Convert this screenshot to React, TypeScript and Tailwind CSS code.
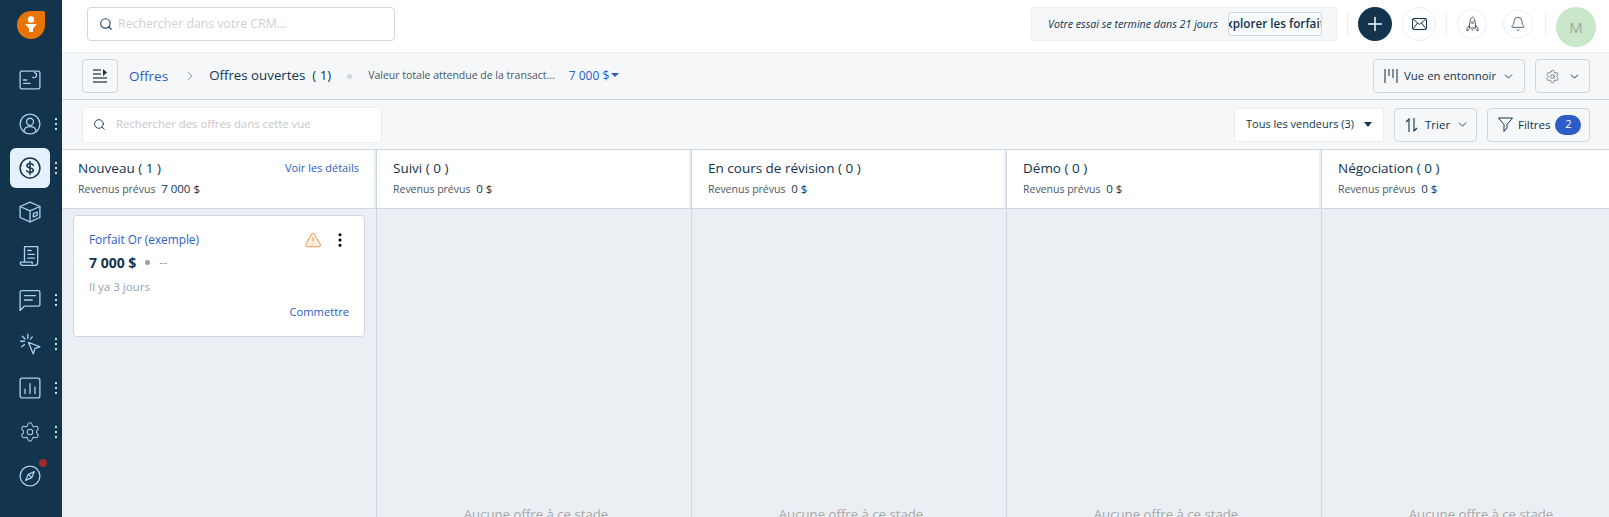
import { ReactNode } from 'react'
import { Search, ChevronDown, ChevronRight, Plus, Bell, Settings, TriangleAlert, EllipsisVertical } from 'lucide-react'

const stroke = {
  fill: 'none',
  stroke: 'currentColor',
  strokeWidth: 1.2,
  strokeLinecap: 'round' as const,
  strokeLinejoin: 'round' as const,
}

function Glyph({ children, size = 22 }: { children: ReactNode, size?: number }) {
  return <svg width={size} height={size} viewBox="0 0 20 20" {...stroke}>{children}</svg>
}

const navItems: { icon: ReactNode, dots?: boolean, active?: boolean, badge?: boolean }[] = [
  {
    icon: <Glyph><rect x="1" y="2" width="18" height="16" rx="1.5" /><path d="M4 13h6M4 10h3M12.500 7.500a2.300 2.300 0 0 0 3.500-2 2.300 2.300 0 0 0-2-2.200" /></Glyph>,
  },
  {
    icon: <Glyph><circle cx="10" cy="10" r="9" /><circle cx="10" cy="8" r="3.200" /><path d="M4.500 17c0-3 2-4.600 5.500-4.600s5.500 1.600 5.500 4.600" /></Glyph>,
    dots: true,
  },
  {
    icon: <Glyph><circle cx="10" cy="10" r="9" strokeWidth={1.4} /><path strokeWidth={1.4} d="M13 7.500c-.5-1-1.600-1.500-3-1.500-1.700 0-2.800.8-2.800 2 0 2.800 5.800 1.300 5.800 4 0 1.200-1.300 2-3 2-1.500 0-2.600-.6-3-1.500M10 4v12" /></Glyph>,
    dots: true,
    active: true,
  },
  {
    icon: <Glyph><path d="M10 1l9 4v10l-9 4-9-4V5z" /><path d="M1 5l9 4 9-4M10 9v10" /><path d="M13 11.500l3.500-1.500v3l-3.500 1.500z" /></Glyph>,
  },
  {
    icon: <Glyph><path d="M5 15V1.500h12V16a2.500 2.500 0 0 1-2.500 2.500H3A2 2 0 0 1 1.500 15.500H12v1.500" /><path d="M8 5h3M8 8.500h6M8 12h6" /></Glyph>,
  },
  {
    icon: <Glyph><path d="M1 3a1.500 1.500 0 0 1 1.500-1.500h15A1.500 1.500 0 0 1 19 3v11a1.500 1.500 0 0 1-1.500 1.500H5L1 19.500z" /><path d="M5 6h10M5 10h7" /></Glyph>,
    dots: true,
  },
  {
    icon: <Glyph><path d="M8.500 8.500l10.500 4-4.500 1.500-1.500 5z" /><path d="M8 1v4M1.500 7.500h3.500M3 3l2.500 2.500M12 3.500L10.500 5.500M2.500 12.500L5 10.500" /></Glyph>,
    dots: true,
  },
  {
    icon: <Glyph><rect x="1" y="1" width="18" height="18" rx="2" /><path d="M5.500 15v-4M10 15V6M14.500 15V9" /></Glyph>,
    dots: true,
  },
  {
    icon: <Settings size={22} strokeWidth={1.1} />,
    dots: true,
  },
  {
    icon: <Glyph><circle cx="10" cy="10" r="9" /><path d="M14 6l-2.500 5.500L6 14l2.500-5.500z" /><path d="M8.500 8.500l3 3" /></Glyph>,
    badge: true,
  },
]

const columns = [
  { name: 'Nouveau ( 1 )', revenue: '7 000 $', details: true },
  { name: 'Suivi ( 0 )', revenue: '0 $' },
  { name: 'En cours de révision ( 0 )', revenue: '0 $' },
  { name: 'Démo ( 0 )', revenue: '0 $' },
  { name: 'Négociation ( 0 )', revenue: '0 $' },
]

function Sidebar() {
  return (
    <div className="w-[62px] shrink-0 bg-[#12344d] flex flex-col items-start">
      <div className="h-[60px] w-full flex justify-center pt-[11px]">
        <svg width="28" height="28" viewBox="0 0 28 28">
          <path d="M14 0h12a2 2 0 0 1 2 2v12a14 14 0 1 1-14-14z" fill="#e87503" />
          <circle cx="14" cy="8.500" r="3.200" fill="#fff" />
          <path d="M8 13h12l-4 4.500v3.500h-4v-3.500z" fill="#fff" />
        </svg>
      </div>
      <div className="flex flex-col gap-[4px] pl-[10px]">
        {navItems.map((item, i) => (
          <div key={i} className="relative w-[40px] h-[40px]">
            <div className={'w-[40px] h-[40px] rounded-[6px] flex items-center justify-center ' + (item.active ? 'bg-[#e5f2fd] text-[#12344d]' : 'text-[#a9d0f0]')}>
              {item.icon}
            </div>
            {item.dots && (
              <div className="absolute left-[45px] top-[14px] flex flex-col gap-[3px]">
                <span className="w-[2px] h-[2px] bg-[#cfd7df]" />
                <span className="w-[2px] h-[2px] bg-[#cfd7df]" />
                <span className="w-[2px] h-[2px] bg-[#cfd7df]" />
              </div>
            )}
            {item.badge && <span className="absolute left-[29px] top-[3px] w-[8px] h-[8px] rounded-full bg-[#a32a2a]" />}
          </div>
        ))}
      </div>
    </div>
  )
}

function TopBar() {
  return (
    <div className="h-[53px] shrink-0 bg-white border-b border-[#ebeff3] flex items-start pl-[25px] pr-[13px] pt-[7px]">
      <div className="w-[308px] h-[34px] border border-[#cfd7df] rounded-[4px] flex items-center pl-[11px] gap-[5px]">
        <Search size={14} className="text-[#264966]" strokeWidth={2} />
        <span className="text-[12.300px] text-[#d3cfcf]">Rechercher dans votre CRM...</span>
      </div>
      <div className="ml-auto flex items-start">
        <div className="w-[306px] h-[34px] bg-[#f5f7f9] border border-[#ebeff3] rounded-[4px] flex items-center pl-[16px]">
          <span className="text-[10.700px] italic text-[#12344d] whitespace-nowrap">Votre essai se termine dans 21 jours</span>
          <div className="ml-[10px] w-[94px] h-[24px] bg-[#f9fafb] border border-[#cfd7df] rounded-[3px] overflow-hidden flex justify-center items-center">
            <span className="text-[11.700px] font-semibold text-[#12344d] whitespace-nowrap">Explorer les forfaits</span>
          </div>
        </div>
        <span className="ml-[10px] mt-[5px] w-px h-[24px] bg-[#ebeff3]" />
        <div className="ml-[10px] w-[34px] h-[34px] rounded-full bg-[#12344d] flex items-center justify-center">
          <Plus size={22} className="text-white" strokeWidth={1.6} />
        </div>
        <div className="ml-[10px] w-[34px] h-[34px] rounded-full border border-[#ebeff3] flex items-center justify-center">
          <svg width="15" height="12" viewBox="0 0 15 12" fill="none" stroke="#12344d" strokeWidth="1">
            <rect x="0.500" y="0.500" width="14" height="11" rx="1" />
            <path d="M1 1l6.500 5.500L14 1M1 11l4.500-6M14 11L9.500 5" />
          </svg>
        </div>
        <span className="ml-[10px] mt-[5px] w-px h-[24px] bg-[#ebeff3]" />
        <div className="ml-[10px] mt-[2px] w-[30px] h-[30px] rounded-full border border-[#ebeff3] flex items-center justify-center">
          <svg width="15" height="17" viewBox="0 0 15 17" fill="none" stroke="#475867" strokeWidth="1">
            <path d="M7.500 1C5 3 4.500 6 4.500 12h6c0-6-.5-9-3-11z" />
            <circle cx="7.500" cy="6.500" r="1" />
            <path d="M4.500 9L2 12.500V15l2.500-2M10.500 9l2.500 3.500V15l-2.500-2M6.500 14h2" />
          </svg>
        </div>
        <div className="ml-[16px] mt-[2px] w-[30px] h-[30px] rounded-full border border-[#ebeff3] flex items-center justify-center">
          <Bell size={16} className="text-[#12344d]" strokeWidth={1.1} />
        </div>
        <span className="ml-[12px] mt-[5px] w-px h-[24px] bg-[#ebeff3]" />
        <div className="ml-[10px] w-[40px] h-[40px] rounded-full bg-[#c9e7c9] flex items-center justify-center text-[15px] text-[#a0a8a0]">M</div>
      </div>
    </div>
  )
}

function SubBar() {
  return (
    <div className="h-[47px] shrink-0 bg-[#f5f7f9] border-b border-[#cfd7df] flex items-center pl-[20px] pr-[19px]">
      <div className="w-[36px] h-[34px] border border-[#cfd7df] rounded-[4px] flex items-center justify-center">
        <svg width="15" height="14" viewBox="0 0 15 14" fill="none" stroke="#475867" strokeWidth="1.300">
          <path d="M0 1h8M0 5h8M0 9h14M0 13h14" />
          <path d="M10 0l4 3.500L10 7z" fill="#12344d" stroke="none" />
        </svg>
      </div>
      <span className="ml-[11px] text-[13.500px] text-[#2c5cc5]">Offres</span>
      <ChevronRight size={14} className="ml-[15px] text-[#475867]" strokeWidth={1.2} />
      <span className="ml-[12px] text-[13.300px] text-[#12344d] whitespace-nowrap">Offres ouvertes&nbsp; ( 1)</span>
      <span className="ml-[16px] w-[5px] h-[5px] rounded-full bg-[#cfd7df]" />
      <span className="ml-[16px] text-[10.500px] text-[#475867] whitespace-nowrap">Valeur totale attendue de la transact...</span>
      <span className="ml-[14px] text-[12px] text-[#2c5cc5] whitespace-nowrap">7 000 $</span>
      <span className="ml-[2px] mb-[2px] w-0 h-0 border-l-[4px] border-r-[4px] border-t-[4px] border-l-transparent border-r-transparent border-t-[#2c5cc5]" />
      <div className="ml-auto w-[152px] h-[34px] border border-[#cfd7df] rounded-[4px] flex items-center pl-[10px]">
        <svg width="14" height="14" viewBox="0 0 14 14" stroke="#475867" strokeWidth="1.300"><path d="M1 0v14M5 0v7M9 0v9M13 0v14" /></svg>
        <span className="ml-[6px] text-[11.400px] text-[#12344d] whitespace-nowrap">Vue en entonnoir</span>
        <ChevronDown size={13} className="ml-[6px] text-[#12344d]" strokeWidth={1.6} />
      </div>
      <div className="ml-[10px] w-[55px] h-[34px] border border-[#cfd7df] rounded-[4px] flex items-center justify-center gap-[8px]">
        <Settings size={15} className="text-[#475867]" strokeWidth={1.1} />
        <ChevronDown size={13} className="text-[#12344d]" strokeWidth={1.8} />
      </div>
    </div>
  )
}

function ToolBar() {
  return (
    <div className="h-[50px] shrink-0 bg-[#f5f7f9] border-b border-[#cfd7df] flex items-center pl-[20px] pr-[19px]">
      <div className="w-[300px] h-[36px] bg-white border border-[#ebeff3] rounded-[4px] flex items-center pl-[10px] gap-[10px]">
        <Search size={13} className="text-[#264966]" strokeWidth={1.8} />
        <span className="text-[11.300px] text-[#c7c7c7] whitespace-nowrap">Rechercher des offres dans cette vue</span>
      </div>
      <div className="ml-auto w-[150px] h-[34px] bg-white border border-[#ebeff3] flex items-center pl-[11px]">
        <span className="text-[11px] text-[#12344d] whitespace-nowrap">Tous les vendeurs (3)</span>
        <span className="ml-[10px] w-0 h-0 border-l-[4px] border-r-[4px] border-t-[5px] border-l-transparent border-r-transparent border-t-[#12344d]" />
      </div>
      <div className="ml-[10px] w-[83px] h-[34px] border border-[#cfd7df] rounded-[4px] flex items-center pl-[10px]">
        <svg width="14" height="14" viewBox="0 0 14 14" fill="none" stroke="#12344d" strokeWidth="1.100"><path d="M4 14V1L1 4M9 0v13l3-3" /></svg>
        <span className="ml-[6px] text-[11.500px] text-[#12344d]">Trier</span>
        <ChevronDown size={13} className="ml-[6px] text-[#12344d]" strokeWidth={1.6} />
      </div>
      <div className="ml-[10px] w-[103px] h-[34px] border border-[#cfd7df] rounded-[4px] flex items-center pl-[10px]">
        <svg width="15" height="15" viewBox="0 0 15 15" fill="none" stroke="#12344d" strokeWidth="1" strokeLinejoin="round">
          <path d="M.5 1h14L9 7.500V11l-3 3.500V7.500z" />
        </svg>
        <span className="ml-[5px] text-[11.500px] text-[#12344d]">Filtres</span>
        <span className="ml-[5px] w-[26px] h-[20px] rounded-full bg-[#2c5cc5] text-white text-[11px] flex items-center justify-center">2</span>
      </div>
    </div>
  )
}

function DealCard() {
  return (
    <div className="mt-[6px] ml-[11px] mr-[11px] h-[122px] bg-white border border-[#cfd7df] rounded-[4px] pl-[15px] pr-[15px] pt-[14px]">
      <div className="flex items-center h-[20px]">
        <span className="text-[11.800px] text-[#2c5cc5]">Forfait Or (exemple)</span>
        <TriangleAlert size={18} className="ml-auto text-[#e88a3c]" fill="#fdeede" strokeWidth={1.2} />
        <EllipsisVertical size={18} className="ml-[9px] text-black" strokeWidth={2.2} />
      </div>
      <div className="mt-[2px] flex items-center">
        <span className="text-[14px] font-bold text-[#12344d]">7 000 $</span>
        <span className="ml-[9px] w-[5px] h-[5px] rounded-full bg-[#92a2b1]" />
        <span className="ml-[9px] text-[12px] text-[#92a2b1]">--</span>
      </div>
      <div className="mt-[5px] text-[11.500px] text-[#92a2b1]">Il ya 3 jours</div>
      <div className="mt-[9px] text-right text-[11.200px] text-[#2c5cc5]">Commettre</div>
    </div>
  )
}

export default function App() {
  return (
    <div className="w-[1609px] h-[517px] overflow-hidden flex bg-white font-['Open_Sans',sans-serif]">
      <Sidebar />
      <div className="flex-1 min-w-0 flex flex-col">
        <TopBar />
        <SubBar />
        <ToolBar />
        <div className="flex-1 min-h-0 flex overflow-hidden">
          {columns.map((col, i) => (
            <div key={col.name} className="w-[315px] shrink-0 flex flex-col border-r border-[#cfd7df] bg-[#ebeff3]">
              <div className="h-[59px] shrink-0 bg-white border-r-[2px] border-b border-r-[#ebeff3] border-b-[#cfd7df] pl-[16px] pr-[15px] pt-[8px]">
                <div className="flex items-center justify-between">
                  <span className="text-[13.500px] font-medium text-[#12344d]">{col.name}</span>
                  {col.details && <span className="text-[11px] text-[#2c5cc5]">Voir les détails</span>}
                </div>
                <div className="mt-[2px] text-[10.500px] text-[#475867]">
                  Revenus prévus <span className="ml-[3px] text-[11.500px] text-[#12344d]">{col.revenue}</span>
                </div>
              </div>
              {i === 0 ? <DealCard /> : <div className="pt-[296px] pl-[4px] text-center text-[13.200px] text-[#a8a8a8] whitespace-nowrap">Aucune offre à ce stade</div>}
            </div>
          ))}
        </div>
      </div>
    </div>
  )
}
